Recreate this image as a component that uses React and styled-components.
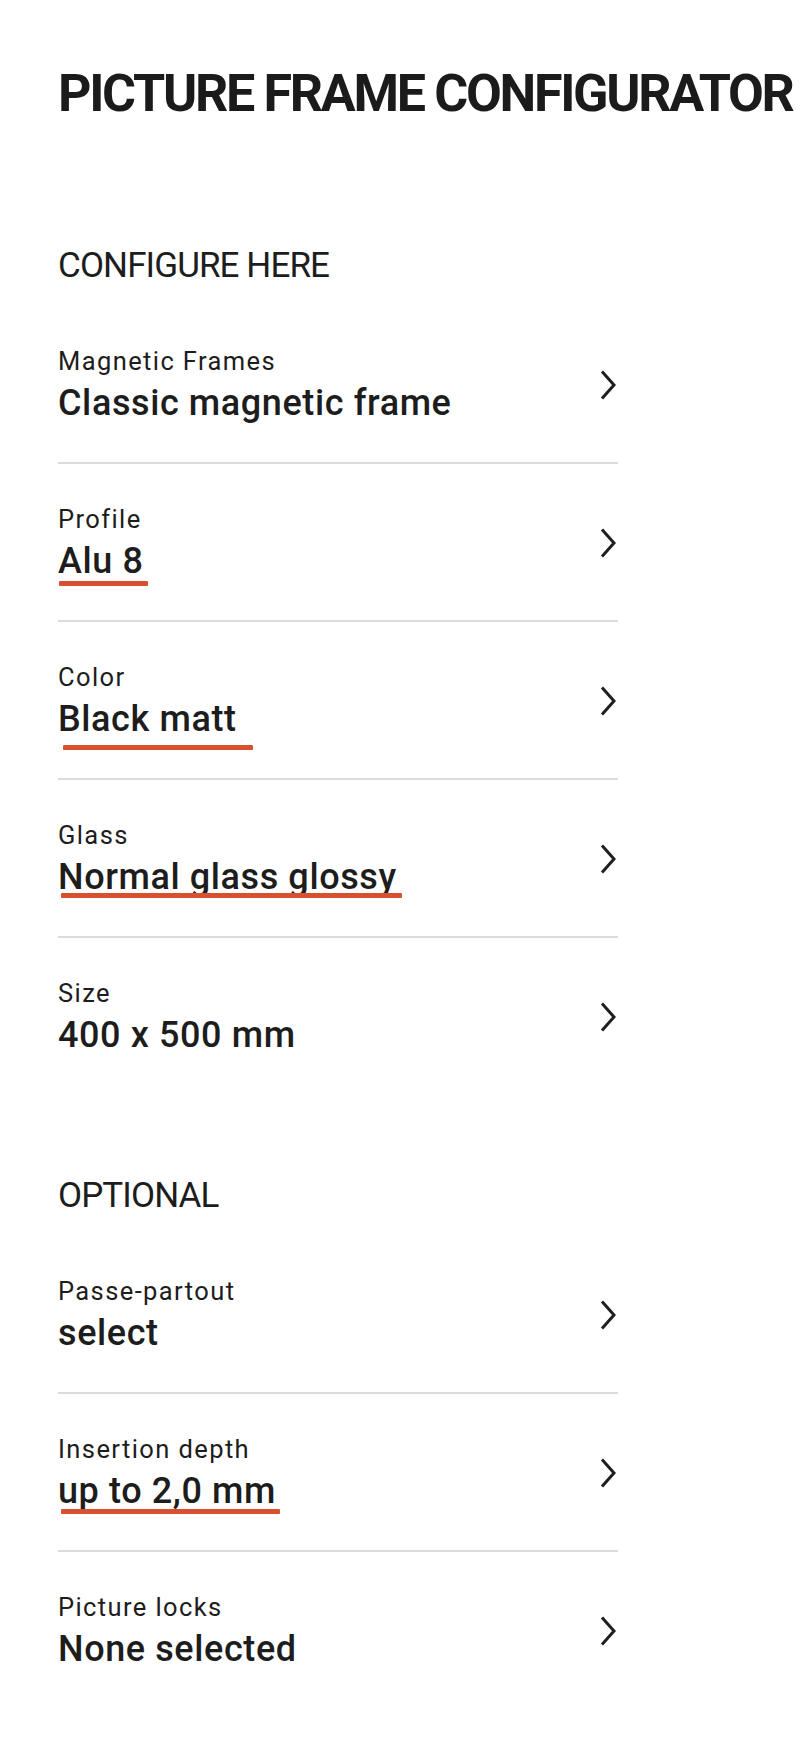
import React from "react";
import styled, { createGlobalStyle } from "styled-components";

const GlobalStyle = createGlobalStyle`
  html, body {
    margin: 0;
    padding: 0;
    background: #ffffff;
  }
  body {
    font-family: Roboto, "Liberation Sans", Arial, sans-serif;
    color: #1d1d1d;
    -webkit-font-smoothing: antialiased;
  }
`;

// offsets of the red brush line under some of the values (px, from the reference)
const sections = [
  {
    title: "CONFIGURE HERE",
    items: [
      { label: "Magnetic Frames", value: "Classic magnetic frame" },
      { label: "Profile", value: "Alu 8", mark: { left: 1, top: 37, width: 89 } },
      { label: "Color", value: "Black matt", mark: { left: 5, top: 43, width: 190 } },
      { label: "Glass", value: "Normal glass glossy", mark: { left: 3, top: 33, width: 341 } },
      { label: "Size", value: "400 x 500 mm" },
    ],
  },
  {
    title: "OPTIONAL",
    items: [
      { label: "Passe-partout", value: "select" },
      { label: "Insertion depth", value: "up to 2,0 mm", mark: { left: 3, top: 35, width: 219 } },
      { label: "Picture locks", value: "None selected" },
    ],
  },
];

const Chevron = () => (
  <ChevronIcon viewBox="0 0 16 30" aria-hidden="true">
    <polyline points="2,1.5 14,15 2,28.5" />
  </ChevronIcon>
);

const App = () => {
  return (
    <>
      <GlobalStyle />
      <Page>
        <Title>PICTURE FRAME CONFIGURATOR</Title>
        {sections.map((section, i) => (
          <Section key={section.title} $first={i === 0}>
            <SectionTitle>{section.title}</SectionTitle>
            <List>
              {section.items.map((item) => (
                <Row key={item.label}>
                  <TextBlock>
                    <Label>{item.label}</Label>
                    <Value>
                      {item.value}
                      {item.mark && (
                        <Mark
                          $left={item.mark.left}
                          $top={item.mark.top}
                          $width={item.mark.width}
                        />
                      )}
                    </Value>
                  </TextBlock>
                  <Chevron />
                </Row>
              ))}
            </List>
          </Section>
        ))}
      </Page>
    </>
  );
};

const Page = styled.div`
  padding: 68px 0 40px 58px;
`;

const Title = styled.h1`
  margin: 0;
  font-size: 52px;
  line-height: 52px;
  font-weight: 700;
  letter-spacing: -2.3px;
  white-space: nowrap;
  color: #1b1b1b;
`;

const Section = styled.section`
  width: 560px;
  margin-top: ${(props) => (props.$first ? "128px" : "84px")};
`;

const SectionTitle = styled.h2`
  margin: 0 0 23px;
  font-size: 35px;
  line-height: 35px;
  font-weight: 400;
  letter-spacing: -0.9px;
`;

const List = styled.div`
  display: flex;
  flex-direction: column;
`;

const Row = styled.div`
  display: flex;
  align-items: center;
  justify-content: space-between;
  padding: 43px 0 41px;
  border-bottom: 2px solid #dcdcdc;
  cursor: pointer;

  &:last-child {
    border-bottom: none;
  }
`;

const TextBlock = styled.div`
  display: flex;
  flex-direction: column;
  align-items: flex-start;
`;

const Label = styled.span`
  font-size: 25.5px;
  line-height: 24px;
  font-weight: 400;
  letter-spacing: 1.4px;
`;

const Value = styled.span`
  position: relative;
  margin-top: 13px;
  font-size: 36px;
  line-height: 35px;
  font-weight: 500;
  letter-spacing: 0.6px;
  white-space: nowrap;
`;

const Mark = styled.span`
  position: absolute;
  left: ${(props) => props.$left}px;
  top: ${(props) => props.$top}px;
  width: ${(props) => props.$width}px;
  height: 5px;
  background: #d9502f;
  border-radius: 1px;
`;

const ChevronIcon = styled.svg`
  width: 16px;
  height: 30px;
  margin-right: 2px;
  flex-shrink: 0;
  fill: none;
  stroke: #1f1f1f;
  stroke-width: 3;
  stroke-linejoin: miter;
`;

export default App;
